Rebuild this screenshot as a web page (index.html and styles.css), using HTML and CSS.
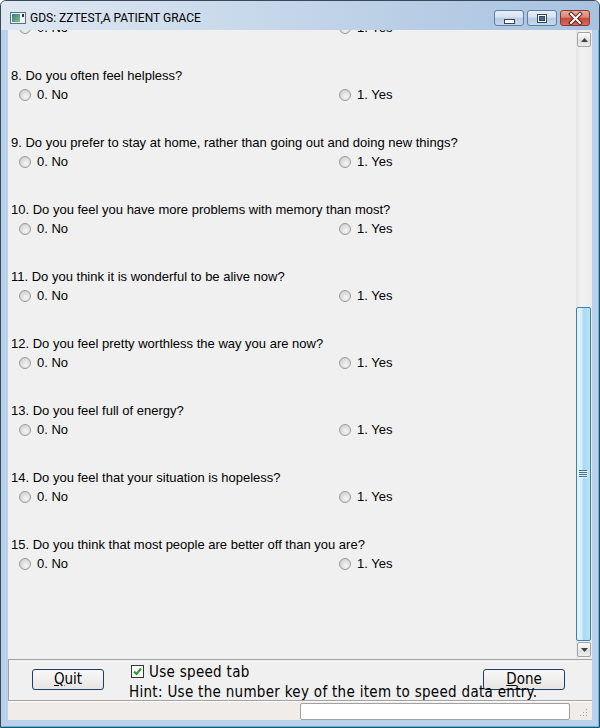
FILE: index.html
```html
<!DOCTYPE html>
<html>
<head>
<meta charset="utf-8">
<link rel="stylesheet" href="styles.css">
</head>
<body>
<div class="window">
  <div class="titlebar">
    <svg class="app-icon" width="16" height="12" viewBox="0 0 16 12">
      <defs>
        <linearGradient id="ig" x1="0" y1="0" x2="1" y2="1">
          <stop offset="0" stop-color="#2e7f98"/>
          <stop offset="1" stop-color="#86c26c"/>
        </linearGradient>
      </defs>
      <rect x="0.5" y="0.5" width="15" height="11" fill="#eef2f6" stroke="#5b7088"/>
      <rect x="2" y="2" width="8" height="8" fill="url(#ig)"/>
      <rect x="12" y="2" width="2" height="3" fill="#333"/>
    </svg>
    <span class="title">GDS: ZZTEST,A PATIENT GRACE</span>
    <div class="caption">
      <div class="cap">
        <svg width="28" height="14" viewBox="0 0 28 14"><rect x="9.5" y="8.5" width="10" height="4" fill="#fff" stroke="#34475e"/></svg>
      </div>
      <div class="cap">
        <svg width="28" height="14" viewBox="0 0 28 14"><rect x="9.5" y="3.5" width="9" height="8" fill="#fff" stroke="#34475e"/><rect x="11.5" y="5.5" width="5" height="4" fill="#4d6a8c" stroke="#34475e"/></svg>
      </div>
      <div class="cap close">
        <svg width="28" height="14" viewBox="0 0 28 14"><path d="M10 3 L19 12 M19 3 L10 12" stroke="#5a2018" stroke-width="4" stroke-linecap="square"/><path d="M10 3 L19 12 M19 3 L10 12" stroke="#fff" stroke-width="2" stroke-linecap="square"/></svg>
      </div>
    </div>
  </div>
  <div class="client">
    <div class="scroll-area">
      <div class="questions">
        <div class="q-list">
          <div class="q"><div class="q-text">7. Do you feel happy most of the time?</div><div class="opts"><div class="opt"><span class="radio"></span>0. No</div><div class="opt"><span class="radio"></span>1. Yes</div></div></div>
          <div class="q"><div class="q-text">8. Do you often feel helpless?</div><div class="opts"><div class="opt"><span class="radio"></span>0. No</div><div class="opt"><span class="radio"></span>1. Yes</div></div></div>
          <div class="q"><div class="q-text">9. Do you prefer to stay at home, rather than going out and doing new things?</div><div class="opts"><div class="opt"><span class="radio"></span>0. No</div><div class="opt"><span class="radio"></span>1. Yes</div></div></div>
          <div class="q"><div class="q-text">10. Do you feel you have more problems with memory than most?</div><div class="opts"><div class="opt"><span class="radio"></span>0. No</div><div class="opt"><span class="radio"></span>1. Yes</div></div></div>
          <div class="q"><div class="q-text">11. Do you think it is wonderful to be alive now?</div><div class="opts"><div class="opt"><span class="radio"></span>0. No</div><div class="opt"><span class="radio"></span>1. Yes</div></div></div>
          <div class="q"><div class="q-text">12. Do you feel pretty worthless the way you are now?</div><div class="opts"><div class="opt"><span class="radio"></span>0. No</div><div class="opt"><span class="radio"></span>1. Yes</div></div></div>
          <div class="q"><div class="q-text">13. Do you feel full of energy?</div><div class="opts"><div class="opt"><span class="radio"></span>0. No</div><div class="opt"><span class="radio"></span>1. Yes</div></div></div>
          <div class="q"><div class="q-text">14. Do you feel that your situation is hopeless?</div><div class="opts"><div class="opt"><span class="radio"></span>0. No</div><div class="opt"><span class="radio"></span>1. Yes</div></div></div>
          <div class="q"><div class="q-text">15. Do you think that most people are better off than you are?</div><div class="opts"><div class="opt"><span class="radio"></span>0. No</div><div class="opt"><span class="radio"></span>1. Yes</div></div></div>
        </div>
      </div>
      <div class="scrollbar">
        <div class="sb-btn">
          <svg width="7" height="4" viewBox="0 0 7 4"><path d="M0 4 L3.5 0 L7 4 Z" fill="#404040"/></svg>
        </div>
        <div class="sb-track">
          <div class="sb-thumb">
            <svg width="9" height="8" viewBox="0 0 9 8">
              <path d="M0 0.5 H8 M0 2.5 H8 M0 4.5 H8 M0 6.5 H8" stroke="#3e6e92"/>
              <path d="M1 1.5 H9 M1 3.5 H9 M1 5.5 H9 M1 7.5 H9" stroke="#e6f5fd"/>
            </svg>
          </div>
        </div>
        <div class="sb-btn">
          <svg width="7" height="4" viewBox="0 0 7 4"><path d="M0 0 L7 0 L3.5 4 Z" fill="#404040"/></svg>
        </div>
      </div>
    </div>
    <div class="bottom">
      <button class="btn quit"><u>Q</u>uit</button>
      <div class="speed">
        <div class="check-line">
          <span class="checkbox">
            <svg width="11" height="11" viewBox="0 0 11 11"><path d="M2 5.5 L4.5 8 L9 2.5" fill="none" stroke="#21a023" stroke-width="2"/></svg>
          </span>
          <span>Use speed tab</span>
        </div>
        <div class="hint">Hint: Use the number key of the item to speed data entry.</div>
      </div>
      <button class="btn done"><u>D</u>one</button>
    </div>
    <div class="status">
      <div class="field"></div>
      <svg class="grip" width="10" height="10" viewBox="0 0 10 10">
        <g fill="#a8a8a8">
          <rect x="8" y="0" width="1" height="1"/>
          <rect x="5" y="3" width="1" height="1"/><rect x="8" y="3" width="1" height="1"/>
          <rect x="2" y="6" width="1" height="1"/><rect x="5" y="6" width="1" height="1"/><rect x="8" y="6" width="1" height="1"/>
        </g>
      </svg>
    </div>
  </div>
</div>
</body>
</html>
```
FILE: styles.css
```css
html, body {
  margin: 0;
  padding: 0;
  background: #ffffff;
}
body {
  width: 600px;
  height: 728px;
  overflow: hidden;
}
.window {
  width: 600px;
  height: 728px;
  box-sizing: border-box;
  border: 1px solid #39495b;
  border-radius: 6px 6px 0 0;
  background: #b9d1ea;
  box-shadow: inset -1px -1px 0 #3ec6e6;
  display: flex;
  flex-direction: column;
  overflow: hidden;
}
.titlebar {
  height: 29px;
  flex: none;
  display: flex;
  align-items: flex-start;
  background: linear-gradient(to right, #dfe8f2 0%, #c8d9eb 40%, #a8c2df 100%);
  padding-right: 9px;
}
.app-icon {
  margin: 11px 0 0 9px;
  flex: none;
}
.title {
  margin: 9px 0 0 4px;
  font: 12px/16px Roboto, "Liberation Sans", sans-serif;
  color: #000;
  white-space: nowrap;
}
.caption {
  margin-left: auto;
  margin-top: 9px;
  display: flex;
  gap: 3px;
}
.cap {
  width: 30px;
  height: 16px;
  box-sizing: border-box;
  border: 1px solid #5f7fa6;
  border-radius: 3px;
  background: linear-gradient(#e6eef7 0%, #d5e2f0 45%, #b8cce4 50%, #c6d7eb 100%);
  display: flex;
}
.cap.close {
  border-color: #8b3b32;
  background: linear-gradient(#e9ab9d 0%, #d98575 45%, #c64a3b 50%, #d46c5c 100%);
}
.client {
  flex: 1;
  margin: 0 7px 7px 7px;
  background: #f0f0f0;
  display: flex;
  flex-direction: column;
  min-height: 0;
}
.scroll-area {
  height: 629px;
  flex: none;
  display: flex;
}
.questions {
  flex: 1;
  overflow: hidden;
}
.q-list {
  margin-top: -31px;
}
.q {
  height: 67px;
}
.q-text {
  height: 19px;
  line-height: 19px;
  padding-left: 3px;
  font-family: "Liberation Sans", Arial, sans-serif;
  font-size: 13px;
  color: #000;
  white-space: nowrap;
}
.opts {
  display: grid;
  grid-template-columns: 320px auto;
  padding-left: 11px;
  height: 19px;
  font-family: "Liberation Sans", Arial, sans-serif;
  font-size: 13px;
  line-height: 19px;
  color: #000;
}
.opt {
  display: flex;
  align-items: center;
  gap: 6px;
  white-space: nowrap;
}
.radio {
  width: 12px;
  height: 12px;
  box-sizing: border-box;
  border-radius: 50%;
  border: 1px solid #9a9a9a;
  background: radial-gradient(circle at 60% 65%, #f6f6f6 0%, #dcdcdc 55%, #c8c8c8 100%);
  flex: none;
}
.scrollbar {
  width: 16px;
  flex: none;
  box-sizing: border-box;
  padding: 2px 1px 2px 0;
  display: flex;
  flex-direction: column;
  background: linear-gradient(to right, #e6e6e6, #f2f2f2 35%, #ececec);
}
.sb-btn {
  height: 15px;
  width: 14px;
  margin-left: 1px;
  box-sizing: border-box;
  border: 1px solid #a3a3a3;
  border-radius: 2px;
  background: linear-gradient(#fafafa, #e8e8e8 50%, #dcdcdc 51%, #ededed);
  display: flex;
  align-items: center;
  justify-content: center;
  flex: none;
}
.sb-track {
  flex: 1;
  display: flex;
  flex-direction: column;
}
.sb-thumb {
  margin-top: 260px;
  height: 334px;
  width: 15px;
  box-sizing: border-box;
  border: 1px solid #3c7fb1;
  border-radius: 2px;
  background: linear-gradient(to right, #e4f5fd 0%, #d2edfb 40%, #a9daf4 50%, #b9e2f7 100%);
  display: flex;
  align-items: center;
  justify-content: center;
}
.bottom {
  height: 40px;
  flex: none;
  border-top: 1px solid #a0a0a0;
  border-bottom: 1px solid #a0a0a0;
  border-left: 1px solid #a0a0a0;
  display: flex;
  align-items: flex-start;
  padding-left: 23px;
  overflow: hidden;
  font-family: "DejaVu Sans Condensed", "DejaVu Sans", sans-serif;
  font-stretch: condensed;
  font-size: 15px;
  color: #000;
}
.btn {
  margin-top: 9px;
  height: 21px;
  box-sizing: border-box;
  border: 1px solid #1c3f66;
  border-radius: 3px;
  background: linear-gradient(#f8f8f8 0%, #f0efee 50%, #e7e4e1 100%);
  font: inherit;
  font-stretch: condensed;
  line-height: 17px;
  color: #000;
  padding: 0;
  flex: none;
}
.quit {
  width: 72px;
}
.done {
  width: 82px;
}
.speed {
  width: 354px;
  margin-left: 25px;
  padding-top: 2px;
  flex: none;
  position: relative;
  z-index: 1;
  letter-spacing: 0.3px;
}
.check-line {
  height: 20px;
  line-height: 20px;
  display: flex;
  align-items: center;
  gap: 5px;
  padding-left: 2px;
}
.checkbox {
  width: 13px;
  height: 13px;
  box-sizing: border-box;
  border: 1px solid #333;
  background: #fff;
  display: flex;
  align-items: center;
  justify-content: center;
  flex: none;
  margin-top: -1px;
}
.hint {
  height: 20px;
  line-height: 20px;
  white-space: nowrap;
}
.status {
  flex: 1;
  display: flex;
  align-items: flex-start;
  background: #efecea;
  border-top: 1px solid #ffffff;
  box-sizing: border-box;
  padding-left: 292px;
}
.field {
  width: 270px;
  height: 17px;
  box-sizing: border-box;
  border: 1px solid #a2a2a2;
  border-radius: 2px;
  background: #ffffff;
  margin-top: 1px;
}
.grip {
  margin: 7px 0 0 8px;
}
```
